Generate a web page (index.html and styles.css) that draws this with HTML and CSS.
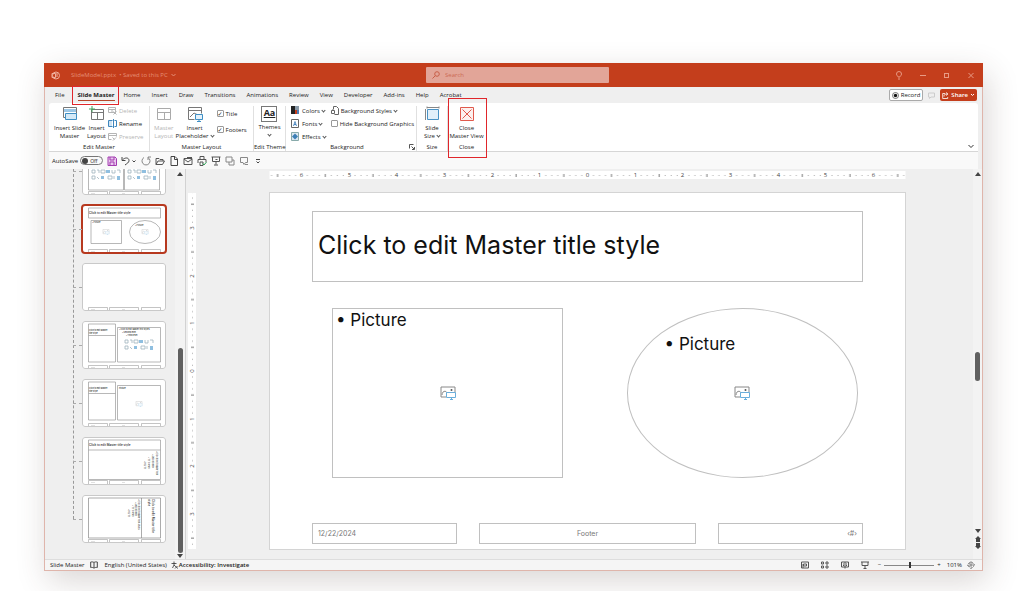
FILE: index.html
```
<!DOCTYPE html>
<html lang="en">
<head>
<meta charset="utf-8">
<title>SlideModel.pptx</title>
<link rel="stylesheet" href="styles.css">
</head>
<body>
<svg class="defs" width="0" height="0" aria-hidden="true">
  <defs>
    <symbol id="pic" viewBox="0 0 16 14">
      <path d="M1 11V1h14v6M1 11h5" fill="none" stroke="#888"/>
      <path d="M2 9c0-4 4-5 5-2" fill="none" stroke="#888"/><circle cx="11.500" cy="4" r="1" fill="#555"/>
      <path d="M6.500 6.500h9v5h-9zM10 13.500h3M11.500 11.500v2" fill="#fff" stroke="#6aaedb"/>
    </symbol>
    <symbol id="foot" viewBox="0 0 84 4">
      <path d="M6.500 4V.5h19V4M27.500 4V.5h29V4M59.500 4V.5h19V4" fill="none" stroke="#aaa" stroke-width=".7"/>
      <path d="M9 2.500h4M40 2.500h3" stroke="#ccc" stroke-width=".6"/>
    </symbol>
    <symbol id="content" viewBox="0 0 30 12">
      <g fill="none" stroke="#9fb3bd" stroke-width=".8">
        <path d="M1 1h3v3H1zM6 1h2v3M10 1h4v3h-4zM21 1v3h3V1M26 1h3v3"/>
        <path d="M1 7h3v3H1zM6 8l2 2M17 7h4v3h-4zM23 7v3"/>
      </g>
      <path d="M15 1h4v3h-4zM10 7h3v3h-3zM26 7h3v4h-3z" fill="#8fbfe0"/>
    </symbol>
    <pattern id="hticks" width="47.700" height="8" patternUnits="userSpaceOnUse" x="318">
      <path d="M6 4v1M12 4v1M18 4v1M30 4v1M36 4v1M42 4v1" stroke="#aaa"/><path d="M24 3v3" stroke="#777"/>
    </pattern>
    <pattern id="vticks" width="8" height="47.700" patternUnits="userSpaceOnUse" y="178">
      <path d="M4 6h1M4 12h1M4 18h1M4 30h1M4 36h1M4 42h1" stroke="#aaa"/><path d="M3 24h3" stroke="#777"/>
    </pattern>
  </defs>
</svg>

<main class="window">
  <header class="titlebar">
    <div class="doc">
      <svg width="9" height="9" viewBox="0 0 9 9" fill="none" stroke="#f0b09d"><circle cx="5" cy="4.500" r="3.500"/><path d="M1 2.500h3.500v4H1zM5 3h2M5 5h2"/></svg>
      <span>SlideModel.pptx&nbsp; • Saved to this PC</span>
      <svg width="5" height="4" viewBox="0 0 5 4" fill="none" stroke="#e58e76"><path d="M.5 1l2 2 2-2"/></svg>
    </div>
    <label class="search">
      <svg width="8" height="8" viewBox="0 0 8 8" fill="none" stroke="#c85f48"><circle cx="5" cy="3" r="2.300"/><path d="M3.300 4.700L.5 7.500"/></svg>
      <input type="text" placeholder="Search" aria-label="Search">
    </label>
    <div class="winbtns">
      <button aria-label="Tips"><svg width="8" height="9" viewBox="0 0 8 9"><path d="M3 6C3 5 1.500 4.500 1.500 3a2.500 2.500 0 015 0C6.500 4.500 5 5 5 6zM3 8h2"/></svg></button>
      <button aria-label="Minimize"><svg width="8" height="9" viewBox="0 0 8 9"><path d="M1 4.500h6"/></svg></button>
      <button aria-label="Maximize"><svg width="8" height="9" viewBox="0 0 8 9"><rect x="1.500" y="2.500" width="4" height="4"/></svg></button>
      <button aria-label="Close"><svg width="8" height="9" viewBox="0 0 8 9"><path d="M1.500 2l5 5M6.500 2l-5 5"/></svg></button>
    </div>
  </header>

  <nav class="tabs">
    <button>File</button>
    <button class="active">Slide Master</button>
    <button>Home</button>
    <button>Insert</button>
    <button>Draw</button>
    <button>Transitions</button>
    <button>Animations</button>
    <button>Review</button>
    <button>View</button>
    <button>Developer</button>
    <button>Add-ins</button>
    <button>Help</button>
    <button>Acrobat</button>
    <div class="tab-actions">
      <button class="record"><svg width="7" height="7" viewBox="0 0 7 7"><circle cx="3.500" cy="3.500" r="3" fill="none" stroke="#555" stroke-width=".8"/><circle cx="3.500" cy="3.500" r="1.700" fill="#111"/></svg>Record</button>
      <button aria-label="Comments"><svg width="7" height="7" viewBox="0 0 7 7" fill="none" stroke="#ccc"><path d="M.5 1h6v4H3L1.500 6.500V5h-1z"/></svg></button>
      <button class="share"><svg width="7" height="7" viewBox="0 0 7 7" fill="none" stroke="#fff" stroke-width=".8"><path d="M3 1.500H.7v5h5V5M2 4.500c0-2 1-2.500 3-2.500M4 .5L6 2 4 3.500"/></svg>Share<svg width="5" height="4" viewBox="0 0 5 4" fill="none" stroke="#fff"><path d="M1 1l1.500 1.500L4 1"/></svg></button>
    </div>
  </nav>

  <section class="ribbon">
    <div class="group edit-master">
      <div class="tools">
        <button class="big"><svg width="16" height="16" viewBox="0 0 16 16"><path d="M1.500 1.500h13v10h-13z" fill="#fff" stroke="#777"/><path d="M2 3h12v3H2z" fill="#9cc7e6"/><path d="M3.500 7.500h11v6h-11z" fill="#d4e9f7" stroke="#3f8fc4"/></svg><span>Insert Slide<br>Master</span></button>
        <button class="big"><svg width="16" height="16" viewBox="0 0 16 16" fill="none" stroke="#777"><path d="M2.500 3.500h12v10h-12zM2.500 6.500h12M8.500 6.500v7"/><path d="M3 0v6M0 3h6" stroke="#41a35c"/></svg><span>Insert<br>Layout</span></button>
        <div class="stack">
          <button class="off"><svg width="9" height="9" viewBox="0 0 9 9" fill="none" stroke="#b5b5b5"><path d="M.5 1.500h7v5h-7zM.5 3.500h7M4 3.500v3M5.500 5.500l3 3M8.500 5.500l-3 3"/></svg>Delete</button>
          <button><svg width="9" height="9" viewBox="0 0 9 9" fill="none" stroke="#3f86bd"><path d="M4.500 1.500h-4v6h4M6.500 1.500h2v6h-2M5.500 0v9"/><path d="M1 2h3v5H1z" fill="#cfe4f4" stroke="none"/></svg>Rename</button>
          <button class="off"><svg width="9" height="9" viewBox="0 0 9 9" fill="none" stroke="#b5b5b5"><path d="M.5 1.500h8v3M.5 1.500v6h3M.5 3.500h8M5 8.500l3-3M4.500 5.500l2 2"/></svg>Preserve</button>
        </div>
      </div>
      <div class="caption">Edit Master</div>
    </div>
    <div class="group master-layout">
      <div class="tools">
        <button class="big off"><svg width="16" height="16" viewBox="0 0 16 16" fill="none" stroke="#aaa"><path d="M1.500 2.500h13v11h-13zM1.500 6.500h13M8.500 6.500v7"/></svg><span>Master<br>Layout</span></button>
        <button class="big"><svg width="16" height="16" viewBox="0 0 16 16" fill="none" stroke="#777"><path d="M1.500 13.500v-12h13v6M1.500 13.500h6M1.500 4.500h13"/><path d="M3 11l4-4 4 2"/><path d="M8.500 8.500h7v5h-7zM10 15.500h4M12 13.500v2" fill="#e5f2fb" stroke="#3f8fc4"/></svg><span>Insert<br>Placeholder<i class="chev"></i></span></button>
        <div class="stack checks">
          <label><input type="checkbox" checked>Title</label>
          <label><input type="checkbox" checked>Footers</label>
        </div>
      </div>
      <div class="caption">Master Layout</div>
    </div>
    <div class="group edit-theme">
      <div class="tools">
        <button class="big"><span class="aa">Aa</span>Themes<i class="chev"></i></button>
      </div>
      <div class="caption">Edit Theme</div>
    </div>
    <div class="group background">
      <div class="tools">
        <div class="stack">
          <button><svg width="9" height="9" viewBox="0 0 9 9"><path d="M0 0h4v8H0z" fill="#222"/><path d="M4 0h4v4H4z" fill="#8a9aa8"/><path d="M4 4h2v4H4z" fill="#c43e1c"/><path d="M6 4h2v4H6z" fill="#4a7ebb"/></svg><span>Colors<i class="chev"></i></span></button>
          <button><svg width="9" height="9" viewBox="0 0 9 9" fill="none" stroke="#666"><path d="M.5.5h7v8h-7z"/><path d="M2.500 7L4 2.500 5.500 7M3 5.500h2" stroke="#2e74b5" stroke-width=".8"/></svg><span>Fonts<i class="chev"></i></span></button>
          <button><svg width="9" height="9" viewBox="0 0 9 9"><path d="M.5.5h7v8h-7z" fill="#dbe8f2" stroke="#8aa"/><path d="M4 1.500l3 3-3 3-3-3z" fill="#3d7fb5"/></svg><span>Effects<i class="chev"></i></span></button>
        </div>
        <div class="stack">
          <button><svg width="8" height="9" viewBox="0 0 8 9" fill="none" stroke="#666"><path d="M2.500 3V.5h3l2 2v6h-4M.5 4.500h3v3h-3zM2 3v2"/></svg><span>Background Styles<i class="chev"></i></span></button>
          <label><input type="checkbox">Hide Background Graphics</label>
        </div>
      </div>
      <div class="caption">Background<svg class="launcher" width="6" height="6" viewBox="0 0 6 6" fill="none" stroke="#555"><path d="M.5 4.500v-4h4M2.500 2.500l2.500 2.500M5.500 3v2.500H3"/></svg></div>
    </div>
    <div class="group size">
      <div class="tools">
        <button class="big"><svg width="16" height="16" viewBox="0 0 16 16" fill="none" stroke="#888"><path d="M3.500 3.500h11v10h-11z" fill="#e2f0fa" stroke="#4b93c5"/><path d="M3 1.500h12M1.500 3v11M3 .5v2M15 .5v2"/></svg><span>Slide<br>Size<i class="chev"></i></span></button>
      </div>
      <div class="caption">Size</div>
    </div>
    <div class="group close">
      <div class="tools">
        <button class="big"><svg width="16" height="16" viewBox="0 0 16 16" fill="#fdf1ef" stroke="#e05a4d"><path d="M1.500 1.500h13v13h-13z"/><path d="M3.500 3.500l9 9M12.500 3.500l-9 9"/></svg><span>Close<br>Master View</span></button>
      </div>
      <div class="caption">Close</div>
    </div>
    <button class="collapse" aria-label="Collapse ribbon"><svg width="6" height="5" viewBox="0 0 6 5" fill="none" stroke="#333"><path d="M.5 1L3 3.500 5.500 1"/></svg></button>
  </section>

  <section class="quick">
    <span>AutoSave</span>
    <button class="switch"><i></i>Off</button>
    <button aria-label="Save"><svg width="10" height="10" viewBox="0 0 10 10" fill="none" stroke="#a33cb0"><path d="M1 1h7l1.500 1.500v7H1z" fill="#e9c8ee"/><path d="M3 1v3h4V1M3 9V6h4v3"/></svg></button>
    <button aria-label="Undo"><svg width="16" height="10" viewBox="0 0 16 10" fill="none" stroke="#444"><path d="M1 1v3.500h3.500M1.500 4C4 1 8 1.500 8 4.500 8 6.500 6 7.500 4 9M11.500 4.500L13 6l1.500-1.500"/></svg></button>
    <button aria-label="Redo"><svg width="10" height="10" viewBox="0 0 10 10" fill="none" stroke="#888"><path d="M3 1.500A4 4 0 107 1.500M7 4V1h3"/></svg></button>
    <button aria-label="Open"><svg width="10" height="10" viewBox="0 0 10 10" fill="none" stroke="#555"><path d="M1 8.500v-6h3l1 1h3v1.500M1 8.500l2-3.500h6.500l-2 3.500z"/></svg></button>
    <button aria-label="New"><svg width="10" height="10" viewBox="0 0 10 10" fill="none" stroke="#444"><path d="M2 .5h4l2.500 2.500v6.500H2zM5.500.5v3h3"/></svg></button>
    <button aria-label="Email"><svg width="10" height="10" viewBox="0 0 10 10" fill="none" stroke="#555"><path d="M1 2.500h8v6H1zM1 3l4 3 4-3M4 1.500h5"/></svg></button>
    <button aria-label="Print"><svg width="10" height="10" viewBox="0 0 10 10" fill="none" stroke="#555"><path d="M3 3.500V.5h4v3M1 7V3.500h8V6M3 6h3v3.500H3z"/><path d="M5.500 7.500l1.500 1.500 2.500-3" stroke="#2e9e55"/></svg></button>
    <button aria-label="Present"><svg width="10" height="10" viewBox="0 0 10 10" fill="none" stroke="#555"><path d="M.5 1h9M1.500 1v4.500h7V1M5 5.500v3M3 9h4M4.500 3.500h2"/></svg></button>
    <button aria-label="Duplicate"><svg width="10" height="10" viewBox="0 0 10 10" fill="none" stroke="#888"><path d="M1 1h6v5H1zM4 6v3h5V4H7"/></svg></button>
    <button aria-label="Comment"><svg width="10" height="10" viewBox="0 0 10 10" fill="none" stroke="#888"><path d="M1.500 1.500h7v5h-2L5 8.500 4 6.500H1.500zM6 8.500h3"/></svg></button>
    <button aria-label="Customize"><svg width="10" height="10" viewBox="0 0 10 10" fill="none" stroke="#444"><path d="M3 3.500h4M3.500 5.500L5 7l1.500-1.500"/></svg></button>
  </section>

  <section class="work">
    <aside class="pane">
      <div class="thumbs">
        <button class="thumb"><svg viewBox="0 0 84 48"><path d="M6.500 8h35v35h-35zM42.500 8h35v35h-35z" fill="none" stroke="#999" stroke-width=".7"/><use href="#content" x="8" y="22" width="32" height="12"/><use href="#content" x="44" y="22" width="32" height="12"/><use href="#foot" y="44" width="84" height="4"/></svg></button>
        <button class="thumb selected"><svg viewBox="0 0 84 48"><g fill="none" stroke="#999" stroke-width=".7"><path d="M6.500 3h72v10h-72zM9 15.500h30.500v23H9z"/><ellipse cx="63" cy="27" rx="15.500" ry="11.500"/></g><text x="7" y="9" font-size="3">Click to edit Master title style</text><text x="10" y="18" font-size="2">• Picture</text><text x="53" y="21" font-size="2">• Picture</text><use href="#pic" x="20" y="24" width="8" height="6" opacity=".5"/><use href="#pic" x="59" y="24" width="8" height="6" opacity=".5"/><use href="#foot" y="44" width="84" height="4"/></svg></button>
        <button class="thumb"><svg viewBox="0 0 84 48"><use href="#foot" y="44" width="84" height="4"/></svg></button>
        <button class="thumb"><svg viewBox="0 0 84 48"><path d="M6.500 3h27v38h-27zM6.500 14.500h27M35.500 6.500h43V41h-43z" fill="none" stroke="#999" stroke-width=".7"/><text x="7" y="10" font-size="2">Click to edit Master</text><text x="7" y="13" font-size="2">title style</text><text x="37" y="9" font-size="2">• Click to edit Master text styles</text><text x="40" y="12" font-size="2">• Second level</text><text x="44" y="15" font-size="2">• Third level</text><use href="#content" x="41" y="18" width="32" height="12"/><use href="#foot" y="44" width="84" height="4"/></svg></button>
        <button class="thumb"><svg viewBox="0 0 84 48"><path d="M6.500 3h27v38h-27zM6.500 14.500h27M35.500 6.500h43V41h-43z" fill="none" stroke="#999" stroke-width=".7"/><text x="7" y="10" font-size="2">Click to edit Master</text><text x="7" y="13" font-size="2">title style</text><text x="37" y="10" font-size="2">Picture</text><use href="#pic" x="53" y="22" width="8" height="6" opacity=".5"/><use href="#foot" y="44" width="84" height="4"/></svg></button>
        <button class="thumb"><svg viewBox="0 0 84 48"><path d="M6.500 3h72v39.500h-72zM6.500 13h72" fill="none" stroke="#999" stroke-width=".7"/><text x="7" y="9" font-size="3">Click to edit Master title style</text><g font-size="2"><text transform="translate(74 14) rotate(90)">• Click to edit Master text</text><text transform="translate(70 17) rotate(90)">• Second level</text><text transform="translate(66 20) rotate(90)">• Third level</text><text transform="translate(62 24) rotate(90)">• Fourth</text></g><use href="#foot" y="43" width="84" height="4"/></svg></button>
        <button class="thumb"><svg viewBox="0 0 84 48"><path d="M6.500 3h72v40h-72zM59.500 3v40" fill="none" stroke="#888" stroke-width=".7"/><text transform="translate(70 4) rotate(90)" font-size="3"><tspan x="0" y="0">Click to edit Master title</tspan><tspan x="0" y="4">style</tspan></text><g font-size="2"><text transform="translate(56 4) rotate(90)">• Click to edit Master text styles</text><text transform="translate(53 7) rotate(90)">• Second level</text><text transform="translate(50 10) rotate(90)">• Third level</text><text transform="translate(46 14) rotate(90)">• Fourth</text></g><use href="#foot" y="44" width="84" height="4"/></svg></button>
      </div>
      <div class="vscroll"><i class="up"></i><span class="handle"></span><i class="down"></i></div>
    </aside>

    <div class="stage">
      <svg class="vruler" viewBox="0 0 8 356" preserveAspectRatio="xMidYMid slice"><path d="M0 0h8v356H0z" fill="#fff"/><path d="M0 0h8v356H0z" fill="url(#vticks)"/>
        <g font-size="6" fill="#444" text-anchor="middle"><text transform="translate(6 35) rotate(-90)">3</text><text transform="translate(6 83) rotate(-90)">2</text><text transform="translate(6 130) rotate(-90)">1</text><text transform="translate(6 178) rotate(-90)">0</text><text transform="translate(6 226) rotate(-90)">1</text><text transform="translate(6 273) rotate(-90)">2</text><text transform="translate(6 321) rotate(-90)">3</text></g></svg>
      <div class="canvas">
        <svg class="hruler" viewBox="0 0 636 8"><path d="M0 0h636v8H0z" fill="#fff"/><path d="M0 0h636v8H0z" fill="url(#hticks)"/>
          <g font-size="6" fill="#444" text-anchor="middle"><text x="32" y="6">6</text><text x="80" y="6">5</text><text x="127" y="6">4</text><text x="175" y="6">3</text><text x="223" y="6">2</text><text x="270" y="6">1</text><text x="318" y="6">0</text><text x="366" y="6">1</text><text x="413" y="6">2</text><text x="461" y="6">3</text><text x="509" y="6">4</text><text x="556" y="6">5</text><text x="604" y="6">6</text></g></svg>
        <article class="slide">
          <h1 class="ph">Click to edit Master title style</h1>
          <div class="pictures">
            <div class="ph box"><p>•&nbsp;Picture</p><svg width="16" height="14"><use href="#pic"/></svg></div>
            <div class="ph oval"><p>•&nbsp;Picture</p><svg width="16" height="14"><use href="#pic"/></svg></div>
          </div>
          <footer class="feet">
            <div class="ph">12/22/2024</div>
            <div class="ph mid">Footer</div>
            <div class="ph num">‹#›</div>
          </footer>
        </article>
      </div>
      <div class="vscroll main"><i class="up"></i><span class="handle"></span><i class="down"></i><svg width="6" height="16" viewBox="0 0 6 16" fill="#444"><path d="M0 6l3-3 3 3zM1 6h4v3H1zM0 13h6l-3 3zM1 10h4v3H1z"/></svg></div>
    </div>
  </section>

  <footer class="status">
    <span class="s-name">Slide Master</span>
    <svg class="s-book" width="8" height="8" viewBox="0 0 8 8" fill="none" stroke="#444"><path d="M4 1.500C3 .8 2 .8.7 1v5.500c1.300-.3 2.300 0 3.300.7 1-.7 2-1 3.300-.7V1C6 .8 5 .8 4 1.500v5.500"/></svg>
    <span class="s-lang">English (United States)</span>
    <svg width="8" height="8" viewBox="0 0 8 8" fill="none" stroke="#333" stroke-width=".8"><path d="M.5 2.500h5M3 .5v3.500L1.500 7M3 4l1 1M4 5l3 2.500M6.500 5L4 7.500"/></svg>
    <strong>Accessibility: Investigate</strong>
    <div class="views">
      <button aria-label="Normal"><svg width="8" height="8" viewBox="0 0 8 8"><path d="M.5 1h7v6h-7zM2.500 3h3v2h-3zM2 7V3"/></svg></button>
      <button aria-label="Slide sorter"><svg width="8" height="8" viewBox="0 0 8 8"><path d="M.5 1h2v2h-2zM5 1h2v2H5zM.5 5h2v2h-2zM5 5h2v2H5z"/></svg></button>
      <button aria-label="Reading view"><svg width="8" height="8" viewBox="0 0 8 8"><path d="M.5 1h7v5h-7zM4 1v6.500M2 3h1M5 3h1M2 4.500h1M5 4.500h1"/></svg></button>
      <button aria-label="Slide show"><svg width="8" height="8" viewBox="0 0 8 8"><path d="M0 1h8M1 1v3.500h6V1M4 4.500v3M2.500 7.500h3"/></svg></button>
    </div>
    <div class="zoom"><span>−</span><input type="range" min="10" max="190" value="101" aria-label="Zoom"><span>+</span></div>
    <span class="pct">101%</span>
    <button aria-label="Fit"><svg width="8" height="8" viewBox="0 0 8 8" fill="none" stroke="#444"><path d="M4 .5L7.500 4 4 7.500.5 4z" stroke-dasharray="3 1"/><path d="M3 3h2v2H3z" stroke-width=".6"/></svg></button>
  </footer>
</main>
</body>
</html>
```
FILE: styles.css
```
* { box-sizing: border-box; }
body {
  margin: 0;
  height: 100vh;
  display: flex;
  padding: 63px 41px 20px 44px;
  background: #fff;
  color: #222;
  font: 6px/8px "Open Sans", "Noto Sans", sans-serif;
  overflow: hidden;
}
svg { display: block; flex: none; }
.defs { position: absolute; }
button { font: inherit; color: inherit; background: none; border: 0; padding: 0; margin: 0; display: flex; align-items: center; }
h1, p { margin: 0; font-weight: 400; }
input[type="checkbox"] {
  appearance: none; width: 7px; height: 7px; margin: 0;
  border: 1px solid #999; border-radius: 1px; background: #fff;
  display: grid; place-items: center;
}
input[type="checkbox"]:checked::before { content: "✓"; font: 6px/6px "DejaVu Sans", sans-serif; color: #222; }
.chev { display: inline-block; width: 3px; height: 3px; margin-left: 2px; border: solid #555; border-width: 0 1px 1px 0; transform: translateY(-1px) rotate(45deg); }

.window {
  flex: 1; min-width: 0;
  display: flex; flex-direction: column;
  background: #efefef;
  border: 1px solid #dfb5ab;
  box-shadow: 4px 10px 30px rgba(70, 50, 45, .2);
}

.titlebar { height: 24px; margin: -1px -1px 0; background: #c43e1c; display: grid; grid-template-columns: 382fr 183px 374fr; align-items: center; color: #e58e76; }
.doc { display: flex; align-items: center; gap: 3px; padding-left: 7px; }
.doc span { margin-left: 8px; }
.search { height: 16px; display: flex; align-items: center; gap: 5px; padding-left: 6px; background: #e2a598; border-radius: 1px; }
.search input { flex: 1; min-width: 0; border: 0; background: none; outline: 0; padding: 0; font: inherit; }
.search input::placeholder { color: #cc6a54; opacity: 1; }
.winbtns { display: flex; justify-content: flex-end; gap: 16px; padding-right: 8px; }
.winbtns svg { fill: none; stroke: #e89a84; stroke-width: 1; }

.tabs { height: 16px; display: flex; align-items: center; padding: 0 5px 0 10px; gap: 11px; }
.tabs > button { line-height: 10px; }
.tabs .active { position: relative; font-weight: 700; margin: 0 -2px 0 2px; border-bottom: 1px solid #b7472a; }
.tabs .active::after { content: ""; position: absolute; inset: -4px -4px -5px -6px; border: 1px solid #e0262b; }
.tab-actions { margin-left: auto; display: flex; align-items: center; gap: 5px; }
.record { height: 12px; padding: 0 2px; gap: 2px; background: #fff; border: 1px solid #aaa; border-radius: 2px; font-size: 6px; }
.share { height: 12px; padding: 0 2px; gap: 2px; background: #c43e1c; color: #fff; font-weight: 600; border-radius: 2px; }

.ribbon { height: 49px; margin: 0 4px; display: flex; background: #fff; border-bottom: 1px solid #d6d6d6; border-radius: 3px 3px 0 0; }
.group { display: flex; flex-direction: column; margin: 3px 0 0; border-right: 1px solid #e0e0e0; position: relative; }
.tools { flex: 1; display: flex; align-items: flex-start; }
.caption { text-align: center; line-height: 8px; position: relative; white-space: nowrap; }
.big { flex-direction: column; text-align: center; white-space: nowrap; }
.big svg:first-child { margin-bottom: 2px; }
.stack { display: flex; flex-direction: column; gap: 4px; white-space: nowrap; }
.stack button, .stack label { display: flex; align-items: center; gap: 2px; height: 9px; }
.off { color: #b5b5b5; }
.edit-master { width: 101px; }
.edit-master .tools { padding-left: 5px; gap: 2px; }
.master-layout { width: 104px; }
.master-layout .tools { padding-left: 4px; gap: 2px; }
.checks { padding: 3px 0 0 1px; gap: 7px; }
.edit-theme { width: 32px; }
.edit-theme .tools, .size .tools, .close .tools { justify-content: center; }
.edit-theme .chev { margin: 3px 0 0; }
.aa { width: 16px; height: 16px; margin-bottom: 1px; border: 1px solid #777; font: 700 9px/12px "Open Sans", sans-serif; text-decoration: underline; }
.background { width: 131px; }
.background .tools { padding-left: 5px; gap: 5px; }
.background .caption { padding-right: 8px; }
.launcher { position: absolute; right: 1px; top: 1px; }
.size { width: 31px; }
.close { width: 38px; border-right-color: transparent; }
.close::after { content: ""; position: absolute; inset: -8px -2px -7px 0; border: 1px solid #e0262b; z-index: 2; }
.collapse { margin: auto 4px 2px auto; }

.quick { height: 17px; margin: 0 4px; padding-left: 3px; display: flex; align-items: center; gap: 4px; background: #f9f9f9; }
.switch { width: 23px; height: 9px; padding: 0 2px 0 1px; gap: 2px; border: 1px solid #777; border-radius: 5px; margin-left: -2px; font-size: 5px; }
.switch i { width: 6px; height: 6px; border-radius: 50%; background: #444; }

.work { flex: 1; min-height: 0; display: flex; }
.pane { width: 141px; display: flex; justify-content: flex-end; border-right: 1px solid #d2d2d2; overflow: hidden; }
.thumbs { margin-right: 9px; padding: 0 0 16px 9px; display: flex; flex-direction: column; justify-content: flex-end; gap: 10px; position: relative; }
.thumbs::before { content: ""; position: absolute; left: 0; top: 0; bottom: 40px; border-left: 1px dashed #999; }
.thumb { flex: none; width: 84px; height: 48px; position: relative; background: #fff; border-radius: 3px; outline: 1px solid #c9c9c9; outline-offset: -1px; }
.thumb::before { content: ""; position: absolute; left: -9px; width: 9px; top: 24px; border-top: 1px dashed #aaa; }
.thumb svg { width: 100%; height: 100%; font-family: Inter, sans-serif; font-weight: 500; fill: #222; }
.thumb.selected { outline: 2px solid #b7391f; }
.vscroll { width: 10px; display: flex; flex-direction: column; align-items: center; padding: 3px 0 1px; background: #f3f3f3; }
.up, .down { border: 3px solid transparent; }
.up { border-top: 0; border-bottom: 4px solid #444; }
.down { border-bottom: 0; border-top: 4px solid #444; }
.handle { width: 5px; border-radius: 3px; background: #606060; }
.pane .handle { flex: 0 0 53%; margin: auto 0 1px; }
.main .handle { height: 29px; margin: auto 0; }
.vscroll.main { width: 9px; padding-bottom: 10px; }
.main .up { margin-bottom: 28px; }

.stage { flex: 1; min-width: 0; display: flex; font-family: "Open Sans", sans-serif; }
.vruler { width: 8px; margin: 24px 0 10px 2px; height: auto; }
.canvas { flex: 1; min-width: 0; display: flex; flex-direction: column; padding: 2px 67px 9px 73px; }
.hruler { width: 100%; height: 8px; }
.slide { flex: 1; margin-top: 13px; padding: 18px 42px 5px; background: #fff; border: 1px solid #d4d4d4; display: flex; flex-direction: column; color: #111; font-family: Inter, sans-serif; }
.ph { border: 1px solid #c0c0c0; }
.slide h1 { height: 71px; padding: 0 5px 4px; display: flex; align-items: center; font-size: 25px; line-height: 32px; white-space: nowrap; }
.pictures { margin: 26px 5px 0 20px; display: flex; justify-content: space-between; font-size: 17px; line-height: 22px; }
.pictures .ph { width: 44%; height: 170px; display: grid; grid-template-rows: 1fr auto 1fr; justify-items: center; }
.pictures p { justify-self: start; padding-left: 3px; }
.pictures .oval { border-radius: 50%; }
.pictures .oval p { padding: 24px 0 0 37px; }
.feet { margin-top: auto; display: grid; grid-template-columns: 145fr 217fr 145fr; gap: 22px; font-size: 7px; line-height: 19px; color: #777; }
.feet .ph { padding: 0 5px; }
.mid { text-align: center; }
.num { text-align: right; }

.status { height: 11px; padding: 0 7px 0 5px; display: flex; align-items: center; background: #f5f5f5; border-top: 1px solid #ddd; white-space: nowrap; }
.status strong { font-weight: 600; }
.s-book { margin: 0 6px; }
.s-lang { margin-right: 4px; }
.views { margin-left: auto; display: flex; gap: 12px; }
.views svg { fill: none; stroke: #555; }
.zoom { display: flex; align-items: center; gap: 3px; margin: 0 6px 0 9px; }
.zoom input { appearance: none; width: 50px; height: 1px; margin: 0; background: #888; }
.zoom input::-webkit-slider-thumb { appearance: none; width: 2px; height: 6px; background: #333; }
.pct { margin-right: 5px; }
```
